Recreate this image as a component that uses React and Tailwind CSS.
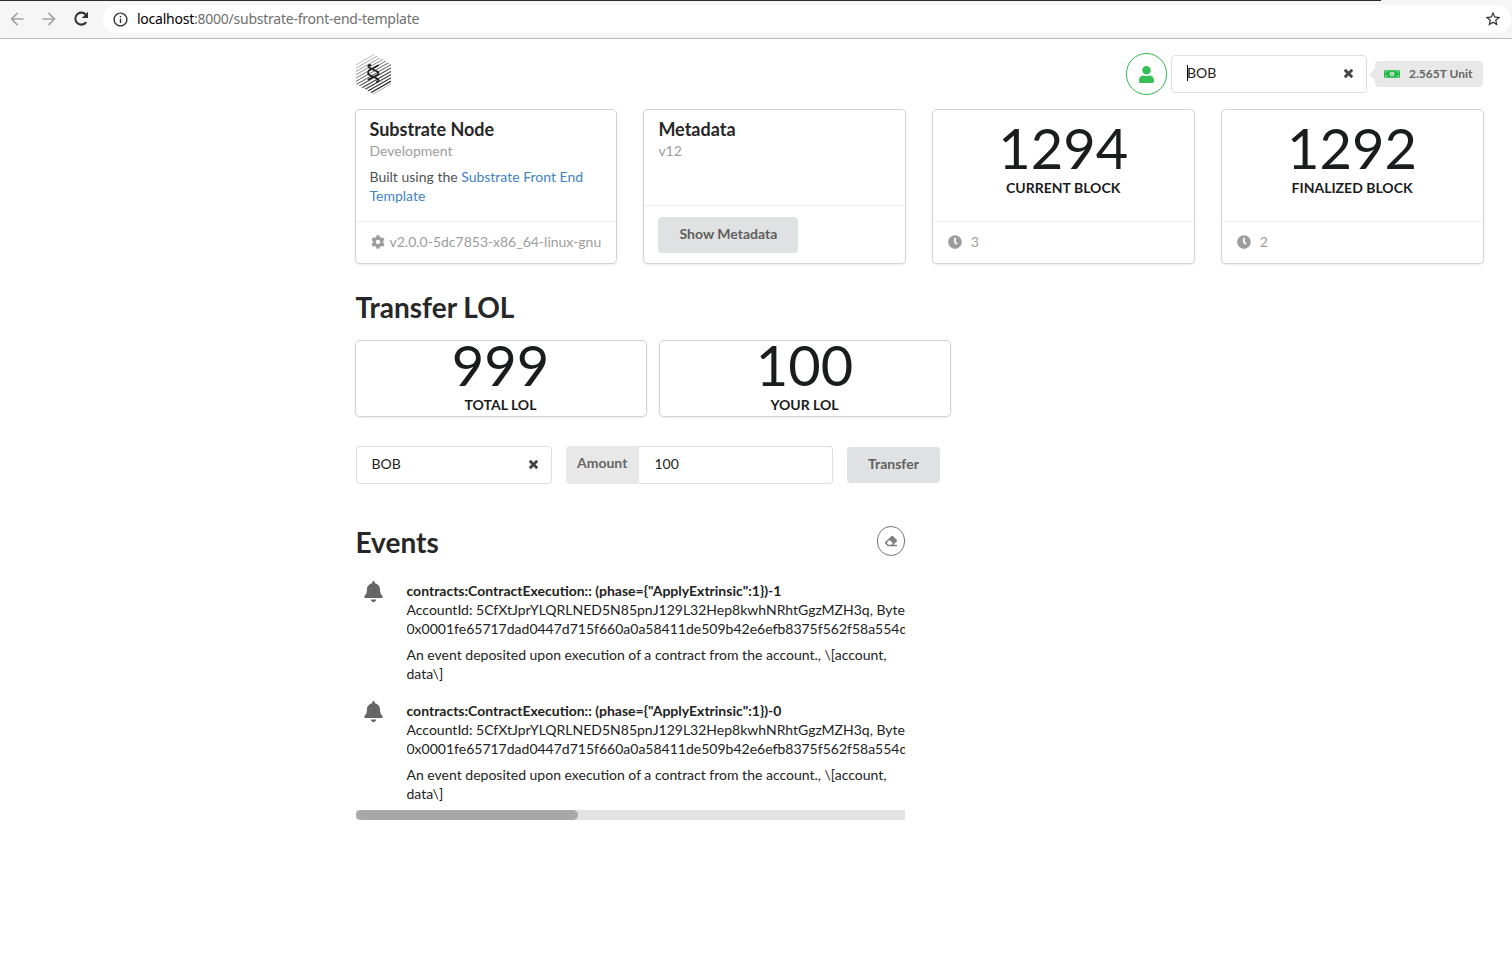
import React from "react";
import { FaUser, FaCog, FaClock, FaBell, FaEraser, FaMoneyBillAlt } from "react-icons/fa";
import { MdArrowBack, MdArrowForward, MdInfoOutline, MdStarBorder } from "react-icons/md";

const cardShadow = "shadow-[0_1px_3px_0_#d4d4d5,0_0_0_1px_#d4d4d5] rounded-[4px] bg-white";

function Logo() {
  const lines = Array.from({ length: 18 }, (_, i) => i);
  return (
    <svg width="36" height="40" viewBox="0 0 36 40">
      <defs>
        <clipPath id="hex">
          <path d="M17.500 0 35 10V30L17.500 40 0 30V10Z" />
        </clipPath>
        <linearGradient id="fade" x1="4" y1="0" x2="30" y2="40" gradientUnits="userSpaceOnUse">
          <stop offset="0" stopColor="#bbb" />
          <stop offset=".5" stopColor="#555" />
          <stop offset="1" stopColor="#111" />
        </linearGradient>
      </defs>
      <g clipPath="url(#hex)">
        {lines.map((i) => (
          <path
            key={i}
            d={`M0 ${10.8 + i * 3.3} L36 ${-9.7 + i * 3.3}`}
            stroke="url(#fade)"
            strokeWidth={0.7 + i * 0.05}
          />
        ))}
      </g>
      <path
        d="M14.500 11.200C12.500 10.500 11.500 12.500 13 13.500L21.500 17.800C22.800 18.800 22.800 19.800 21.500 20.800L12.500 25.500M22 11.500L13 16.500C11.800 17.800 11.800 19.800 13 20.800L21.500 24.800C23.500 26 22.500 28 20.800 27.500"
        fill="none"
        stroke="#222"
        strokeWidth="1.800"
        strokeLinecap="round"
      />
    </svg>
  );
}

function CloseIcon() {
  return (
    <svg width="9" height="9" viewBox="110 366 1188 1188" fill="#444">
      <path d="M1298 1322q0 40-28 68l-136 136q-28 28-68 28t-68-28l-294-294-294 294q-28 28-68 28t-68-28l-136-136q-28-28-28-68t28-68l294-294-294-294q-28-28-28-68t28-68l136-136q28-28 68-28t68 28l294 294 294-294q28-28 68-28t68 28l136 136q28 28 28 68t-28 68l-294 294 294 294q28 28 28 68z" />
    </svg>
  );
}

function ReloadIcon() {
  return (
    <svg width="20" height="20" viewBox="0 0 20 20" fill="none">
      <path d="M15.200 13.200A6 6 0 1 1 14.600 5.400" stroke="#333" strokeWidth="2.100" />
      <path d="M17 2.800V9H10.800Z" fill="#333" />
    </svg>
  );
}

function BrowserBar() {
  return (
    <div className="flex h-[39px] flex-col border-b border-[#bcbcbc] bg-[#f6f6f6]">
      <div className="h-px w-[1381px] shrink-0 bg-[#2e2a2d]" />
      <div className="flex flex-1 items-start pl-[7px] pr-px pt-1">
        <MdArrowBack className="mt-[4px] size-[20px] text-[#a5a5a5]" />
        <MdArrowForward className="ml-[12px] mt-[4px] size-[20px] text-[#a5a5a5]" />
        <div className="ml-[12px] mt-[4px]">
          <ReloadIcon />
        </div>
        <div className="ml-[12px] flex h-[28px] flex-1 items-center rounded-full bg-white pl-[9px] pr-[9px]">
          <MdInfoOutline className="size-[17px] text-[#333]" />
          <span className="ml-[8px] whitespace-nowrap pb-px font-['Noto_Sans',sans-serif] text-[14px] tracking-[-0.240px] text-[#707070]">
            <span className="text-black">localhost</span>:8000/substrate-front-end-template
          </span>
          <MdStarBorder className="ml-auto size-[18px] text-[#333]" />
        </div>
      </div>
    </div>
  );
}

function AccountSelect({ caret }) {
  return (
    <div className="flex h-[38px] w-[196px] items-center justify-between rounded-[4px] border border-[#dedede] bg-white pl-[15px] pr-[13px]">
      <div className="flex items-center pb-[2px]">
        {caret && <span className="-mr-px h-4 w-px bg-black" />}
        <span>BOB</span>
      </div>
      <div className="pb-px">
        <CloseIcon />
      </div>
    </div>
  );
}

function Header() {
  return (
    <div className="flex h-[70px] items-center">
      <div>
        <Logo />
      </div>
      <div className="ml-auto flex h-[42px] w-[41px] items-center justify-center rounded-full border border-[#2db84b]">
        <FaUser className="size-[17px] text-[#35bf55]" />
      </div>
      <div className="ml-[4px]">
        <AccountSelect caret />
      </div>
      <div className="relative ml-[8px] flex h-[26px] w-[108px] items-center rounded-[4px] bg-[#e8e8e8] pl-[9px]">
        <span className="absolute -left-[4.500px] top-[8.500px] size-[9px] rotate-45 bg-[#e8e8e8]" />
        <FaMoneyBillAlt preserveAspectRatio="none" className="relative -mt-px h-[10px] w-[16px] text-[#21ba45]" />
        <span className="ml-[9px] text-[12px] font-bold text-[#666]">2.565T Unit</span>
      </div>
    </div>
  );
}

function Card({ children, extra }) {
  return (
    <div className={`flex h-[153px] flex-col ${cardShadow}`}>
      <div className="flex-1">{children}</div>
      {extra}
    </div>
  );
}

function CardTitle({ title, meta }) {
  return (
    <>
      <div className="pt-[8px] text-[18px] font-bold leading-[23px] text-[#272727]">{title}</div>
      <div className="leading-[20px] text-[#9d9d9d]">{meta}</div>
    </>
  );
}

function BlockCard({ value, label, seconds }) {
  return (
    <Card
      extra={
        <div className="flex h-[42px] items-center border-t border-[#f0f0f0] px-[15px] pb-[2px] text-[#9d9d9d]">
          <FaClock className="size-[14px]" />
          <span className="ml-[8.500px]">{seconds}</span>
        </div>
      }
    >
      <div className="flex flex-col items-center pr-px pt-[10px]">
        <Statistic value={value} label={label} />
      </div>
    </Card>
  );
}

function Statistic({ value, label }) {
  return (
    <>
      <div className="text-[56px] leading-[56px] text-[#1b1c1d]">{value}</div>
      <div className="mt-[2px] text-[14px] font-bold leading-[20px] text-[#1b1c1d]">{label}</div>
    </>
  );
}

function EventItem({ index }) {
  return (
    <div className="flex h-[120px] pt-[4px]">
      <div className="flex w-[51px] shrink-0 pl-[7px]">
        <FaBell className="h-[21px] w-[21px] text-[#666]" />
      </div>
      <div className="w-[498.500px] leading-[19px] text-[#222]">
        <div className="font-bold">{`contracts:ContractExecution:: (phase={"ApplyExtrinsic":1})-${index}`}</div>
        <div className="whitespace-nowrap">AccountId: 5CfXtJprYLQRLNED5N85pnJ129L32Hep8kwhNRhtGgzMZH3q, Byte</div>
        <div className="overflow-hidden whitespace-nowrap">0x0001fe65717dad0447d715f660a0a58411de509b42e6efb8375f562f58a554d</div>
        <div className="mt-[7px]">An event deposited upon execution of a contract from the account., \[account, data\]</div>
      </div>
    </div>
  );
}

export default function App() {
  return (
    <div className="h-[959px] w-[1512px] overflow-hidden bg-white font-['Lato',sans-serif] text-[14px] leading-[20px] text-[#222]">
      <BrowserBar />
      <main className="ml-[355.500px] w-[1127.500px]">
        <Header />
        <div className="mt-px grid grid-cols-4 gap-[28px]">
          <Card
            extra={
              <div className="flex h-[42px] items-center border-t border-[#f0f0f0] px-[15px] pb-[2px] text-[#9d9d9d]">
                <FaCog className="size-[14px]" />
                <span className="ml-[5px] whitespace-nowrap">v2.0.0-5dc7853-x86_64-linux-gnu</span>
              </div>
            }
          >
            <div className="px-[14px]">
              <CardTitle title="Substrate Node" meta="Development" />
              <div className="mt-[6px] leading-[19px] text-[#525252]">
                Built using the <a className="text-[#4183c4]">Substrate Front End Template</a>
              </div>
            </div>
          </Card>
          <Card
            extra={
              <div className="h-[58px] border-t border-[#f0f0f0] px-[14px] pt-[11px]">
                <button className="block h-[36px] w-[140px] rounded-[4px] bg-[#e0e1e2] pb-[2px] font-bold text-[#5f5f60]">Show Metadata</button>
              </div>
            }
          >
            <div className="px-[14px]">
              <CardTitle title="Metadata" meta="v12" />
            </div>
          </Card>
          <BlockCard value="1294" label="CURRENT BLOCK" seconds="3" />
          <BlockCard value="1292" label="FINALIZED BLOCK" seconds="2" />
        </div>

        <h1 className="mt-[26px] text-[28px] font-bold leading-[36px] text-[#272727]">Transfer LOL</h1>
        <div className="mt-[16px] flex gap-[14px]">
          <div className={`flex h-[75px] w-[290px] flex-col items-center ${cardShadow}`}>
            <div className="-mt-[4px] text-center">
              <Statistic value="999" label="TOTAL LOL" />
            </div>
          </div>
          <div className={`flex h-[75px] w-[290px] flex-col items-center ${cardShadow}`}>
            <div className="-mt-[4px] text-center">
              <Statistic value="100" label="YOUR LOL" />
            </div>
          </div>
        </div>

        <div className="mt-[30px] flex items-center">
          <AccountSelect />
          <div className="ml-[14px] flex h-[38px] w-[267px]">
            <div className="w-[73px] rounded-l-[4px] bg-[#e8e8e8] pl-[11.500px] pt-[7px] font-bold text-[#666]">Amount</div>
            <div className="flex flex-1 items-center rounded-r-[4px] border border-l-0 border-[#dedede] pb-[2px] pl-[16px]">100</div>
          </div>
          <button className="ml-[14px] h-[36px] w-[93px] rounded-[4px] bg-[#e0e1e2] pb-[2px] pl-px font-bold text-[#5f5f60]">Transfer</button>
        </div>

        <section className="mt-[40px] w-[549.500px]">
          <div className="flex h-[37px] items-start justify-between">
            <h1 className="text-[28px] font-bold leading-[36px] text-[#272727]">Events</h1>
            <div className="mt-[2px] flex h-[30px] w-[28px] items-center justify-center rounded-full border border-[#767676]">
              <FaEraser className="size-[12px] text-[#808080]" />
            </div>
          </div>
          <div className="mt-[16px]">
            <EventItem index={1} />
            <EventItem index={0} />
          </div>
          <div className="-mt-[7px] h-[10px] bg-[#e3e3e3]">
            <div className="h-full w-[222px] rounded-[5px] bg-[#a8a8a8]" />
          </div>
        </section>
      </main>
    </div>
  );
}
